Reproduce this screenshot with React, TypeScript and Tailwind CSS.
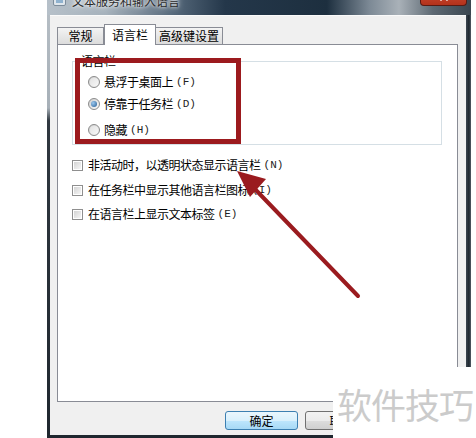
import { X } from 'lucide-react';

const radios = [
  { label: '悬浮于桌面上', key: 'F', checked: false, gap: 'mt-0' },
  { label: '停靠于任务栏', key: 'D', checked: true, gap: 'mt-[6px]' },
  { label: '隐藏', key: 'H', checked: false, gap: 'mt-[10px]' },
];

const checks = [
  { label: '非活动时，以透明状态显示语言栏', key: 'N', gap: 'mt-[12px]' },
  { label: '在任务栏中显示其他语言栏图标', key: 'I', gap: 'mt-[9px]' },
  { label: '在语言栏上显示文本标签', key: 'E', gap: 'mt-[8px]' },
];

function Hotkey({ k }: { k: string }) {
  return (
    <span className="ml-[3px] font-['Liberation_Mono',monospace] text-[11px] tracking-[0px] text-[#222]">
      ({k})
    </span>
  );
}

function Radio({ checked }: { checked: boolean }) {
  return (
    <span className="w-[12px] h-[12px] rounded-full border border-[#8b8b8b] bg-[linear-gradient(135deg,#cfcfcf,#fafafa)] flex items-center justify-center shrink-0">
      {checked ? (
        <span className="w-[6px] h-[6px] rounded-full bg-[radial-gradient(circle_at_35%_35%,#9cc8ee,#245c94)]" />
      ) : (
        <span className="w-[8px] h-[8px] rounded-full bg-[linear-gradient(135deg,#e2e2e2,#f7f7f7)]" />
      )}
    </span>
  );
}

function Checkbox() {
  return (
    <span className="w-[11px] h-[11px] border border-[#8f8f8f] bg-white p-[1px] shrink-0 flex">
      <span className="flex-1 bg-[linear-gradient(135deg,#d4d4d4,#f6f6f6)]" />
    </span>
  );
}

export default function App() {
  return (
    <div className="relative w-[476px] h-[438px] overflow-hidden bg-white font-['Noto_Sans_CJK_SC','Liberation_Sans',sans-serif] text-black">
      {/* dialog window */}
      <div className="ml-[47px] mt-[-15px] w-[424px] flex flex-col">
        {/* title bar */}
        <div className="h-[30px] flex items-start bg-[linear-gradient(90deg,#b6c0c9_0%,#a6b2bc_14%,#55687a_30%,#24374a_42%,#1d2f3f_66%,#7c8995_76%,#a9b1b8_83%,#5d6973_91%,#3a4650_100%)]">
          <div className="flex items-center pt-[9px] pl-[6px]">
            <svg width="13" height="12" viewBox="0 0 13 12" className="shrink-0">
              <rect x="0.5" y="1.5" width="12" height="9" rx="1.5" fill="#dfe6ec" stroke="#7d8d9b" />
              <rect x="3" y="4" width="7" height="4" fill="#8fb2cf" />
            </svg>
            <span className="ml-[6px] text-[12px] leading-[14px] text-[#2a2a2a] [text-shadow:0_0_6px_#ffffff,0_0_3px_#ffffff]">
              文本服务和输入语言
            </span>
          </div>
          <div className="ml-auto mr-[4px] w-[47px] h-[21px] rounded-b-[4px] border border-t-0 border-[#5a1a12] bg-[linear-gradient(180deg,#e6a08a,#c7452c_45%,#b3321c)] flex items-end justify-center pb-[2px]">
            <X className="w-[12px] h-[12px] text-white" strokeWidth={3.5} />
          </div>
        </div>

        {/* frame + client area */}
        <div className="flex h-[423px]">
          <div className="w-[3px] bg-[linear-gradient(180deg,#b5bdc4_0%,#a7b0b8_22%,#303840_25%,#1f272f_100%)]" />
          <div className="flex-1 flex flex-col">
            <div className="flex-1 bg-[#f0f0f0] pl-[7px] pr-[8px] pt-[8px] flex flex-col border-t border-[#fafafa]">
              {/* tabs */}
              <div className="flex items-end h-[21px] text-[12px]">
                <div className="w-[47px] h-[17px] mb-[1px] border border-b-0 border-[#898c95] bg-[linear-gradient(180deg,#f3f3f3,#dcdcdc)] flex items-center justify-center leading-none">
                  常规
                </div>
                <div className="relative z-10 w-[52px] h-[21px] border border-b-0 border-[#898c95] bg-white flex items-center justify-center leading-none pb-[1px]">
                  语言栏
                </div>
                <div className="w-[67px] h-[17px] mb-[1px] border border-b-0 border-l-0 border-[#898c95] bg-[linear-gradient(180deg,#f3f3f3,#dcdcdc)] flex items-center justify-center leading-none">
                  高级键设置
                </div>
              </div>

              {/* panel */}
              <div className="mt-[-1px] h-[358px] border border-[#898c95] bg-white flex flex-col text-[12px] tracking-[-0.5px]">
                <div className="relative mt-[16px] ml-[14px] mr-[15px] border border-[#d5dfe5] pl-[15px] pt-[12px] pb-[6px] flex flex-col">
                  <span className="absolute left-[7px] top-[-9px] bg-white px-[1px] leading-[16px]">语言栏</span>
                  {radios.map((r) => (
                    <div key={r.key} className={`h-[16px] flex items-center ${r.gap}`}>
                      <Radio checked={r.checked} />
                      <span className="ml-[4px] leading-[16px]">{r.label}</span>
                      <Hotkey k={r.key} />
                    </div>
                  ))}
                </div>

                <div className="ml-[14px] flex flex-col">
                  {checks.map((c) => (
                    <div key={c.key} className={`h-[16px] flex items-center ${c.gap}`}>
                      <Checkbox />
                      <span className="ml-[5px] leading-[16px]">{c.label}</span>
                      <Hotkey k={c.key} />
                    </div>
                  ))}
                </div>
              </div>

              {/* buttons */}
              <div className="mt-[9px] flex justify-end gap-[7px] text-[12px]">
                <button className="w-[73px] h-[19px] rounded-[3px] border border-[#3c7fb1] bg-[linear-gradient(180deg,#eaf6fd_0%,#d9f0fc_50%,#bee6fd_51%,#a7d9f5_100%)] flex items-center justify-center leading-none">
                  确定
                </button>
                <button className="w-[73px] h-[19px] rounded-[3px] border border-[#707070] bg-[linear-gradient(180deg,#f2f2f2_0%,#ebebeb_50%,#dddddd_51%,#cfcfcf_100%)] flex items-center justify-center leading-none">
                  取消
                </button>
                <div className="w-[73px] h-[19px]" />
              </div>
            </div>
            <div className="h-[3px] bg-[#1f272f]" />
          </div>
          <div className="w-[5px] bg-[linear-gradient(90deg,#3c4650,#1c252d_60%,#55606a)]" />
        </div>
      </div>

      {/* red annotation box */}
      <div className="absolute left-[75px] top-[58px] w-[166px] h-[86px] border-[5px] border-[#9c1a1e]" />

      {/* red arrow */}
      <svg className="absolute left-0 top-0 pointer-events-none" width="476" height="438" viewBox="0 0 476 438">
        <line x1="358" y1="296" x2="252" y2="186" stroke="#9a1b1f" strokeWidth="4" strokeLinecap="round" />
        <polygon points="237,171 266,179 250,197" fill="#9a1b1f" />
      </svg>

      {/* watermark */}
      <div className="absolute left-[333px] top-[367px] w-[143px] h-[71px] bg-white flex items-center pl-[4px] pt-[2px]">
        <span className="text-[35px] leading-none tracking-[-1px] text-[#cbcbcb]">软件技巧</span>
      </div>
    </div>
  );
}
